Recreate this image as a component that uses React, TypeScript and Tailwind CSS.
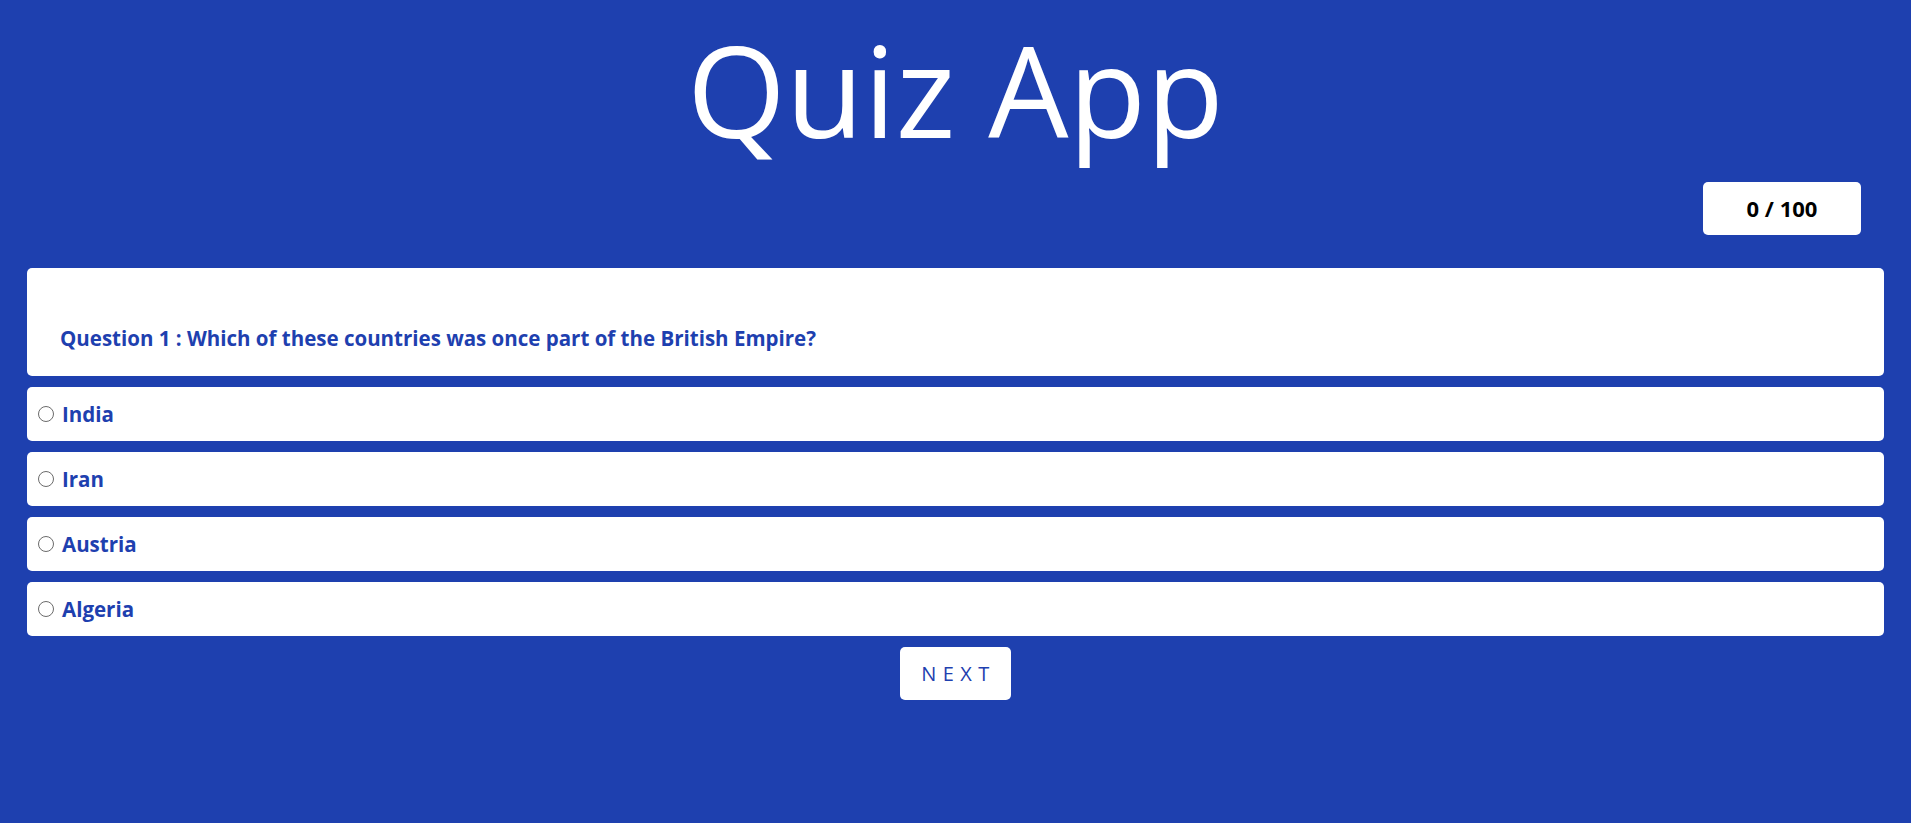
import React from "react";

const options = ["India", "Iran", "Austria", "Algeria"];

export default function App() {
  return (
    <div
      className="min-h-[823px] w-full bg-[#1e40af] text-white"
      style={{ fontFamily: '"Open Sans", "Noto Sans", sans-serif' }}
    >
      <h1 className="pt-[18px] text-center text-[127px] leading-[142px] font-normal text-white">
        Quiz App
      </h1>
      <div className="mt-[22px] flex justify-end pr-[50px]">
        <div className="flex h-[53px] w-[158px] items-center justify-center rounded-[5px] bg-white text-[22px] font-bold text-black">
          0 / 100
        </div>
      </div>
      <div className="mx-[27px] mt-[33px] flex flex-col gap-[11px]">
        <div className="flex h-[108px] items-end rounded-[5px] bg-white px-[33px] pb-[22px] text-[20.5px] font-bold text-[#1e40af]">
          Question 1 : Which of these countries was once part of the British Empire?
        </div>
        {options.map((o) => (
          <label
            key={o}
            className="flex h-[54px] items-center gap-[8px] rounded-[5px] bg-white pl-[11px] text-[20.5px] font-bold text-[#1e40af]"
          >
            <span className="h-[16px] w-[16px] rounded-full border border-[#6b6b6b] bg-white" />
            <span>{o}</span>
          </label>
        ))}
      </div>
      <div className="mt-[11px] flex justify-center">
        <button className="flex h-[53px] w-[111px] items-center justify-center rounded-[5px] bg-white pl-[6px] text-[20px] tracking-[6.5px] text-[#1e40af]">
          NEXT
        </button>
      </div>
    </div>
  );
}
